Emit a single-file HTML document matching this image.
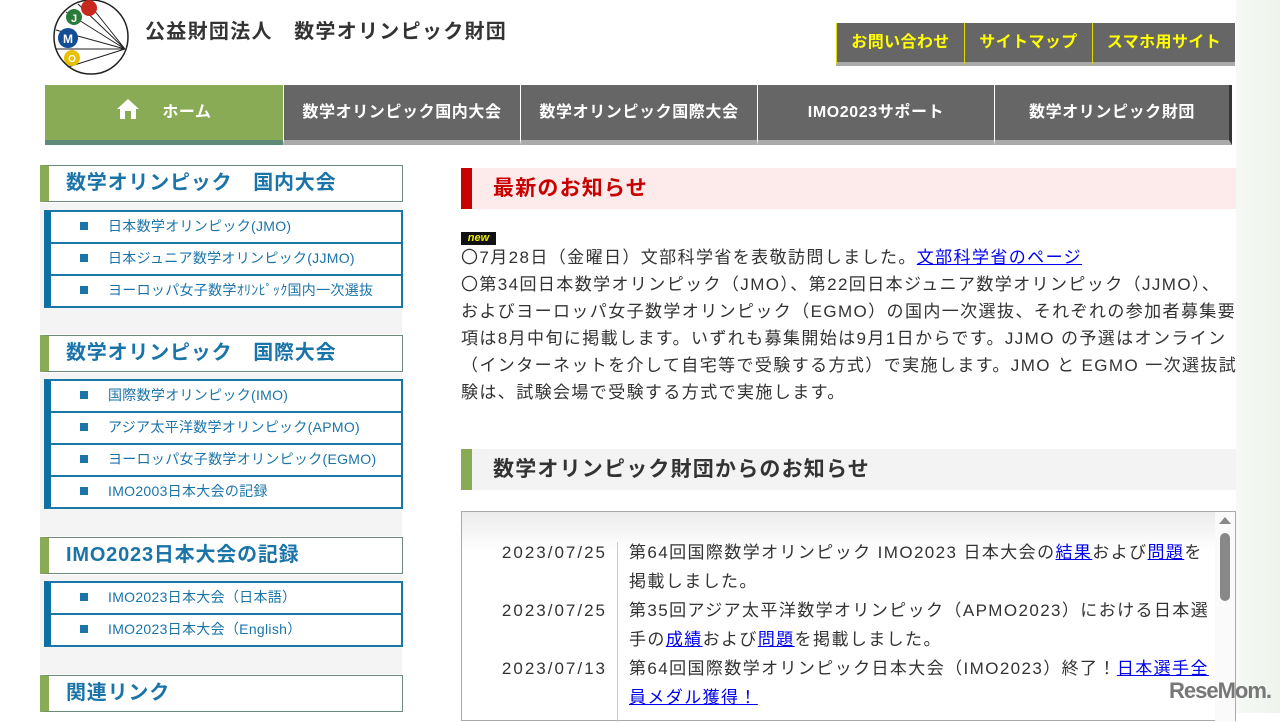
<!DOCTYPE html>
<html><head><meta charset="utf-8">
<style>
*{margin:0;padding:0;box-sizing:border-box}
body{width:1280px;height:713px;overflow:hidden;background:#fff;font-family:"Liberation Sans","Noto Sans CJK JP",sans-serif;color:#333;position:relative}
.abs{position:absolute}
.rstrip{position:absolute;left:1236px;top:0;width:44px;height:713px;background:linear-gradient(90deg,#f6f9f5,#eef3ec)}
.title{left:145px;top:15px;font-size:20px;font-weight:bold;color:#333;letter-spacing:1.3px;white-space:nowrap}
.tb{top:23px;height:43px;background:#666;border-bottom:4px solid #aaa;border-left:1px solid #dd0;color:#ff0;font-weight:bold;font-size:16px;text-align:center;line-height:39px;letter-spacing:0.4px}
.nav{top:85px;height:60px;background:#666;border-bottom:5px solid #aaa;color:#fff;font-weight:bold;font-size:16px;text-align:center;line-height:56px;border-left:1px solid #fff;letter-spacing:0.6px}
.sh{left:40px;width:363px;height:37px;border:1px solid #6a8a7a;border-left:9px solid #8aab56;color:#1b74a8;font-weight:bold;font-size:20px;line-height:35px;padding-left:17px;white-space:nowrap;letter-spacing:0.8px}
.gray{left:40px;width:362px;background:#f4f4f4}
.list{left:44px;width:359px;border:2px solid #1a78a8;border-left:7px solid #0f6fa0;background:#fff}
.list div{height:32px;line-height:29px;border-top:2px solid #1a78a8;font-size:14px;color:#1b74a8;padding-left:29px;white-space:nowrap;letter-spacing:0.3px}
.list div:first-child{border-top:none;height:30px}
.list div b{display:inline-block;width:8px;height:8px;background:#1b74a8;margin-right:20px;vertical-align:1px}
.mh{left:461px;width:775px;height:41px;font-weight:bold;font-size:21px;line-height:41px;padding-left:21px;letter-spacing:1.2px}
.txt{left:461px;top:244px;width:778px;font-size:17px;line-height:27px;color:#333;letter-spacing:1.4px;white-space:nowrap}
a{color:#00e;text-decoration:underline}
.box{left:461px;top:511px;width:775px;height:210px;border:1px solid #aaa;background:linear-gradient(#ececec,#fff 40px)}
.row{position:absolute;left:0;width:750px;font-size:17px;line-height:28.5px;letter-spacing:1.4px}
.row .d{position:absolute;left:0;width:145px;text-align:right;letter-spacing:2px}
.row .t{position:absolute;left:167px;width:588px}
</style></head><body>
<div class="rstrip"></div>
<svg class="abs" style="left:52px;top:0" width="80" height="78" viewBox="0 0 80 78">
<circle cx="39" cy="37" r="37" fill="none" stroke="#222" stroke-width="1.5"/>
<g stroke="#222" stroke-width="1" fill="none"><path d="M73 49 L14 12 M73 49 L26 4 M73 49 L4 30 M73 49 L4 49 M73 49 L16 67 M73 49 L38 5"/></g>
<circle cx="37" cy="8" r="8" fill="#c8281e"/>
<circle cx="22" cy="17" r="8" fill="#2a7a3a"/><text x="22" y="22" font-size="11" font-weight="bold" fill="#fff" text-anchor="middle" font-family="Liberation Sans">J</text>
<circle cx="16" cy="38" r="10" fill="#124e96"/><text x="16" y="43" font-size="12" font-weight="bold" fill="#fff" text-anchor="middle" font-family="Liberation Sans">M</text>
<circle cx="20" cy="58" r="8" fill="#e8c000"/><text x="20" y="62" font-size="10" font-weight="bold" fill="#fff" text-anchor="middle" font-family="Liberation Sans">O</text>
</svg>
<div class="abs title">公益財団法人　数学オリンピック財団</div>
<div class="abs tb" style="left:836px;width:128px">お問い合わせ</div>
<div class="abs tb" style="left:964px;width:128px">サイトマップ</div>
<div class="abs tb" style="left:1092px;width:143px">スマホ用サイト</div>

<div class="abs nav" style="left:45px;width:238px;background:#8aab56;border-bottom-color:#5f8a7a;border-left:none"><svg width="24" height="22" viewBox="0 0 24 22" style="vertical-align:-3px;margin-right:22px"><path d="M12 1 L1 11 H4 V21 H20 V11 H23 Z" fill="#fff"/><rect x="9" y="13" width="6" height="8" fill="#8aab56"/></svg>ホーム</div>
<div class="abs nav" style="left:283px;width:237px">数学オリンピック国内大会</div>
<div class="abs nav" style="left:520px;width:237px">数学オリンピック国際大会</div>
<div class="abs nav" style="left:757px;width:237px">IMO2023サポート</div>
<div class="abs nav" style="left:994px;width:238px;border-right:3px solid #333">数学オリンピック財団</div>

<div class="abs gray" style="top:203px;height:131px"></div>
<div class="abs gray" style="top:373px;height:163px"></div>
<div class="abs gray" style="top:575px;height:99px"></div>
<div class="abs sh" style="top:165px">数学オリンピック　国内大会</div>
<div class="abs list" style="top:210px"><div><b></b>日本数学オリンピック(JMO)</div><div><b></b>日本ジュニア数学オリンピック(JJMO)</div><div><b></b>ヨーロッパ女子数学ｵﾘﾝﾋﾟｯｸ国内一次選抜</div></div>
<div class="abs sh" style="top:335px">数学オリンピック　国際大会</div>
<div class="abs list" style="top:379px"><div><b></b>国際数学オリンピック(IMO)</div><div><b></b>アジア太平洋数学オリンピック(APMO)</div><div><b></b>ヨーロッパ女子数学オリンピック(EGMO)</div><div><b></b>IMO2003日本大会の記録</div></div>
<div class="abs sh" style="top:537px">IMO2023日本大会の記録</div>
<div class="abs list" style="top:581px"><div><b></b>IMO2023日本大会（日本語）</div><div><b></b>IMO2023日本大会（English）</div></div>
<div class="abs sh" style="top:675px">関連リンク</div>

<div class="abs mh" style="top:168px;background:#fdeaea;border-left:11px solid #c80000;color:#c80000">最新のお知らせ</div>
<div class="abs" style="left:461px;top:232px;width:35px;height:13px;background:#111;color:#ee0;font-size:11px;font-weight:bold;font-style:italic;line-height:13px;text-align:center">new</div>
<div class="abs txt">〇7月28日（金曜日）文部科学省を表敬訪問しました。<a>文部科学省のページ</a><br>〇第34回日本数学オリンピック（JMO）、第22回日本ジュニア数学オリンピック（JJMO）、<br>およびヨーロッパ女子数学オリンピック（EGMO）の国内一次選抜、それぞれの参加者募集要<br>項は8月中旬に掲載します。いずれも募集開始は9月1日からです。JJMO の予選はオンライン<br>（インターネットを介して自宅等で受験する方式）で実施します。JMO と EGMO 一次選抜試<br>験は、試験会場で受験する方式で実施します。</div>

<div class="abs mh" style="top:449px;background:#f3f3f3;border-left:11px solid #8aab56;color:#333">数学オリンピック財団からのお知らせ</div>
<div class="abs box">
<div class="abs" style="left:155px;top:30px;width:1px;height:180px;background:#ccc"></div>
<div class="row" style="top:27px"><span class="d">2023/07/25</span><span class="t">第64回国際数学オリンピック IMO2023 日本大会の<a>結果</a>および<a>問題</a>を掲載しました。</span></div>
<div class="row" style="top:85px"><span class="d">2023/07/25</span><span class="t">第35回アジア太平洋数学オリンピック（APMO2023）における日本選手の<a>成績</a>および<a>問題</a>を掲載しました。</span></div>
<div class="row" style="top:143px"><span class="d">2023/07/13</span><span class="t">第64回国際数学オリンピック日本大会（IMO2023）終了！<a>日本選手全員メダル獲得！</a></span></div>
<div class="abs" style="left:753px;top:0;width:20px;height:210px;background:#fafafa"></div>
<div class="abs" style="left:757px;top:5px;width:0;height:0;border-left:6px solid transparent;border-right:6px solid transparent;border-bottom:7px solid #888"></div>
<div class="abs" style="left:758px;top:21px;width:10px;height:68px;border-radius:5px;background:#888"></div>
</div>
<div class="abs" style="left:1169px;top:678px;font-size:22px;font-weight:bold;color:#777;letter-spacing:-1px">ReseMom.</div>
</body></html>
